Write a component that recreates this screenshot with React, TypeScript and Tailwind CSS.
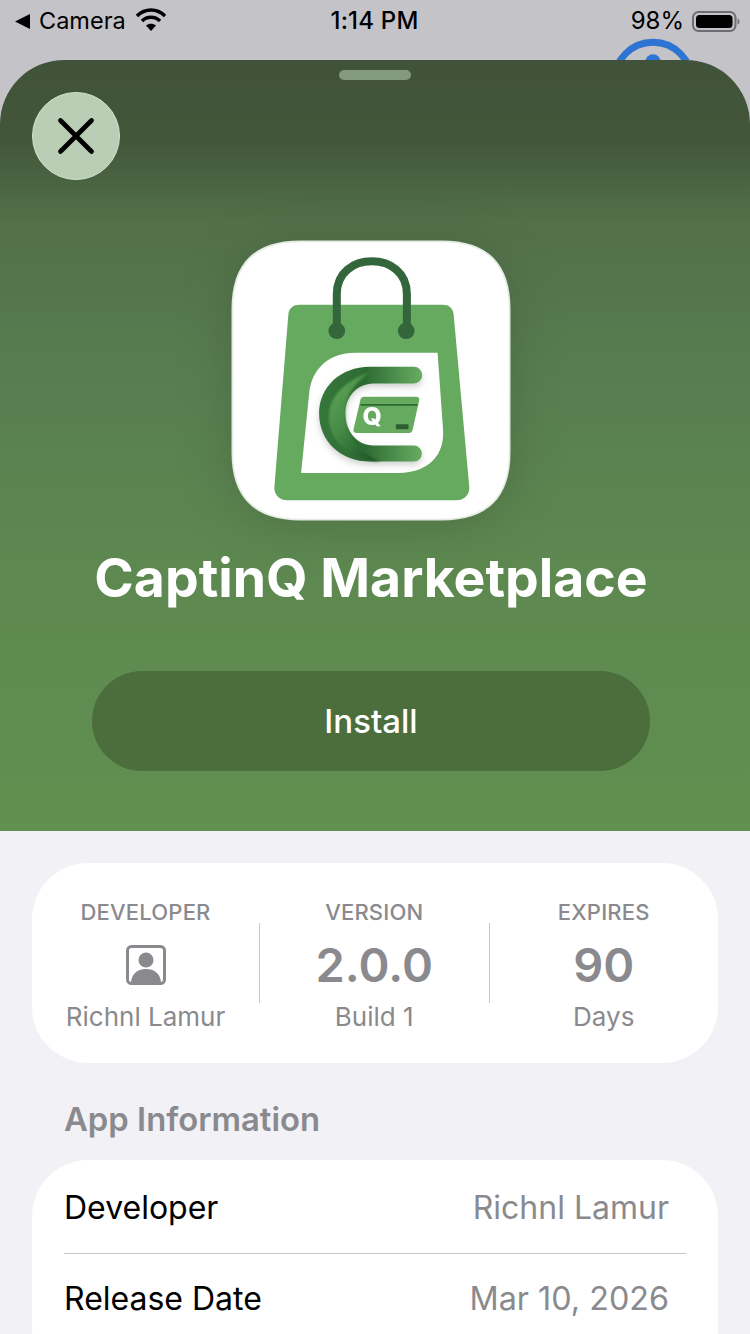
import React from "react";

function Logo() {
  return (
    <svg viewBox="30 25 845 848" className="w-[282px] h-[283px]">
      <defs>
        <linearGradient id="arm" x1="0" y1="0" x2="1" y2="0">
          <stop offset="0" stopColor="#35773a" />
          <stop offset="0.45" stopColor="#2d6b33" />
          <stop offset="1" stopColor="#69ad62" />
        </linearGradient>
        <linearGradient id="cres" x1="0.1" y1="0" x2="0.8" y2="1">
          <stop offset="0" stopColor="#62a85c" />
          <stop offset="0.5" stopColor="#458a45" />
          <stop offset="1" stopColor="#1f5528" />
        </linearGradient>
        <filter id="soft" x="-10%" y="-10%" width="120%" height="125%">
          <feDropShadow dx="0" dy="10" stdDeviation="9" floodColor="#5c6b5c" floodOpacity="0.3" />
        </filter>
        <filter id="blurEdge" x="-10%" y="-10%" width="120%" height="120%">
          <feGaussianBlur stdDeviation="3" />
        </filter>
      </defs>
      <path
        d="M240 32 H665 C800 32 868 100 868 235 V665 C868 800 800 866 665 866 H240 C105 866 37 800 37 665 V235 C37 100 105 32 240 32 Z"
        fill="#ffffff"
        stroke="#e4ebe2"
        strokeWidth="5"
      />
      <path
        d="M238 222 H668 C686 222 698 232 700 250 L747 768 C749 792 730 808 708 808 H202 C180 808 161 792 163 768 L205 250 C207 232 220 222 238 222 Z"
        fill="#66aa60"
      />
      <path d="M350 300 V190 C350 125 400 92 455 92 C510 92 560 125 560 190 V300" fill="none" stroke="#33663a" strokeWidth="24" />
      <circle cx="350" cy="300" r="25" fill="#33663a" />
      <circle cx="558" cy="300" r="25" fill="#33663a" />
      <path d="M652 366 H405 C325 366 274 415 267 490 L243 726 H535 C625 726 676 672 668 590 Z" fill="#ffffff" />
      <g filter="url(#soft)">
        <path
          d="M581 408 H450 C360 408 297 470 297 548 C297 632 362 692 450 692 H581 A24 24 0 0 0 581 644 H460 C410 644 375 600 375 548 C375 500 410 458 460 458 H581 A25 25 0 0 0 581 408 Z"
          fill="url(#arm)"
        />
        <path
          d="M450 424 C385 445 326 490 326 560 C326 632 395 690 480 692 C420 670 375 615 375 548 C375 495 405 450 450 424 Z"
          fill="url(#cres)"
          filter="url(#blurEdge)"
        />
      </g>
      <path d="M432 498 H588 C595 498 598 502 597 508 L577 598 C576 603 572 606 566 606 H408 C402 606 399 602 400 596 L421 506 C422 501 426 498 432 498 Z" fill="#66aa60" />
      <path d="M421 522 L592 522" stroke="#2f6a34" strokeWidth="5" fill="none" />
      <text x="456" y="582" fontFamily="Inter, sans-serif" fontWeight="800" fontSize="74" fill="#ffffff" textAnchor="middle">Q</text>
      <rect x="527" y="580" width="38" height="15" rx="2" fill="#2f5f30" />
    </svg>
  );
}

function Stat({ label, children, sub, className }: { label: string; children: React.ReactNode; sub: string; className: string }) {
  return (
    <div className={`flex flex-col items-center ${className}`}>
      <div className="text-[22px] leading-[26px] font-medium text-[#8a8a8e] tracking-[0.2px]">{label}</div>
      <div className="h-[70px] mt-[5px] flex items-center justify-center">{children}</div>
      <div className="mt-[2px] text-[26px] leading-[30px] text-[#8a8a8e]">{sub}</div>
    </div>
  );
}

export default function App() {
  return (
    <div
      className="relative w-[750px] h-[1334px] overflow-hidden bg-[#c4c3c8] text-black"
      style={{ fontFamily: "Inter, 'Noto Sans', sans-serif" }}
    >
      <svg viewBox="0 0 100 100" className="absolute left-[610px] top-[38px] w-[86px] h-[86px]">
        <circle cx="50" cy="50" r="45" fill="none" stroke="#2d74d3" strokeWidth="8" />
        <circle cx="50" cy="28" r="9" fill="#2d74d3" />
      </svg>

      <div className="relative h-[60px] flex items-center justify-between pl-[15px] pr-[10px] pb-[19px] pt-[1px]">
        <div className="flex items-center w-[180px]">
          <svg viewBox="0 0 15 15" className="w-[15px] h-[15px]">
            <path d="M15 0 V15 L0 7.5 Z" fill="#000" />
          </svg>
          <span className="ml-[9px] text-[23.5px] leading-[28px]">Camera</span>
          <svg viewBox="0 0 30 24" className="ml-[10px] w-[30px] h-[24px] -mt-[2px]">
            <path d="M1 8 C9 0 21 0 29 8" fill="none" stroke="#000" strokeWidth="3.4" />
            <path d="M6 13 C11 8 19 8 24 13" fill="none" stroke="#000" strokeWidth="3.4" />
            <path d="M10 17.5 C13 15 17 15 20 17.5 L15 23 Z" fill="#000" />
          </svg>
        </div>
        <div className="text-[24px] leading-[28px] font-medium ml-[-6px] tracking-[0.2px]">1:14 PM</div>
        <div className="flex items-center w-[180px] justify-end">
          <span className="text-[24px] leading-[28px] mr-[-1px]">98%</span>
          <svg viewBox="0 0 48 21" className="ml-[9px] w-[48px] h-[21px]">
            <rect x="1" y="1" width="42.5" height="19" rx="5.5" fill="none" stroke="#6e6e72" strokeWidth="2" />
            <rect x="4" y="4" width="36.5" height="13" rx="3.5" fill="#000" />
            <path d="M45.5 7.5 C47 8 47.5 9 47.5 10.5 C47.5 12 47 13 45.5 13.5 Z" fill="#77777b" />
          </svg>
        </div>
      </div>

      <div className="relative h-[1274px] bg-[#f1f1f6] rounded-t-[64px] overflow-hidden">
        <div className="relative h-[771px] bg-[linear-gradient(180deg,#40533a_0%,#425639_10%,#52704a_21%,#587c50_39%,#5d8850_65%,#619050_100%)] flex flex-col items-center">
          <div className="mt-[10px] w-[72px] h-[10px] rounded-full bg-[#849a80]" />
          <div className="absolute left-[32px] top-[32px] w-[88px] h-[88px] rounded-full bg-[#b9ceb4] border-[1.5px] border-[#d3e3cc] flex items-center justify-center">
            <svg viewBox="0 0 36 36" className="w-[36px] h-[36px]">
              <path d="M2.5 2.5 L33.5 33.5 M33.5 2.5 L2.5 33.5" stroke="#000" strokeWidth="4.6" strokeLinecap="round" />
            </svg>
          </div>
          <div className="mt-[159px] ml-[-9px] drop-shadow-[0_6px_24px_rgba(40,60,30,0.25)]">
            <Logo />
          </div>
          <h1 className="mt-[26px] ml-[-8px] text-[53.5px] leading-[60px] font-bold text-white whitespace-nowrap">CaptinQ Marketplace</h1>
          <button className="mt-[63px] ml-[-8px] pt-[2px] w-[558px] h-[100px] rounded-[50px] bg-[#4c6d3c] text-white text-[33px] font-medium">
            Install
          </button>
        </div>

        <div className="px-[32px] pt-[32px]">
          <div className="h-[200px] bg-white rounded-[56px] pt-[36px] flex">
            <Stat className="w-[227px] flex-none" label="DEVELOPER" sub="Richnl Lamur">
              <svg viewBox="0 0 40 40" className="w-[40px] h-[40px]">
                <rect x="1.5" y="1.5" width="37" height="37" rx="4" fill="none" stroke="#8a8a8e" strokeWidth="3" />
                <circle cx="20" cy="15" r="7.5" fill="#8a8a8e" />
                <path d="M5 37 C6 28 12 24 20 24 C28 24 34 28 35 37 Z" fill="#8a8a8e" />
              </svg>
            </Stat>
            <div className="w-px h-[80px] mt-[24px] bg-[#c8c8cc]" />
            <Stat className="flex-1" label="VERSION" sub="Build 1">
              <span className="text-[47px] leading-[56px] font-semibold text-[#8a8a8e]">2.0.0</span>
            </Stat>
            <div className="w-px h-[80px] mt-[24px] bg-[#c8c8cc]" />
            <Stat className="flex-1" label="EXPIRES" sub="Days">
              <span className="text-[47px] leading-[56px] font-semibold text-[#8a8a8e]">90</span>
            </Stat>
          </div>

          <h2 className="mt-[36px] ml-[32px] text-[32.8px] leading-[40px] font-semibold text-[#8a8a8e]">App Information</h2>

          <div className="mt-[21px] bg-white rounded-[56px] pl-[32px] pr-[32px] pb-[40px]">
            <div className="h-[94px] pt-[3px] flex items-center justify-between border-b border-[#c8c8cc]">
              <span className="text-[32px]">Developer</span>
              <span className="text-[32px] text-[#8a8a8e] mr-[17px]">Richnl Lamur</span>
            </div>
            <div className="h-[90px] flex items-center justify-between">
              <span className="text-[32px]">Release Date</span>
              <span className="text-[32.3px] text-[#8a8a8e] mr-[17px]">Mar 10, 2026</span>
            </div>
          </div>
        </div>
      </div>
    </div>
  );
}
